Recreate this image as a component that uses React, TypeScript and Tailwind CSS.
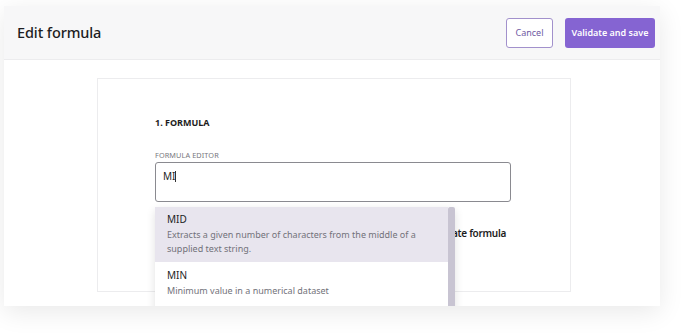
import React from "react";

const suggestions = [
  {
    name: "MID",
    description:
      "Extracts a given number of characters from the middle of a supplied text string.",
    active: true,
  },
  {
    name: "MIN",
    description: "Minimum value in a numerical dataset",
    active: false,
  },
];

export default function App() {
  return (
    <div
      className="w-[688px] h-[333px] bg-white overflow-hidden pl-[4px] pt-[6px]"
      style={{ fontFamily: '"Noto Sans", "Open Sans", sans-serif' }}
    >
      <div className="relative w-[656px] h-[300px] bg-white overflow-hidden shadow-[0_6px_24px_rgba(0,0,0,0.09)]">
        {/* header */}
        <div className="flex items-center justify-between h-[54px] bg-[#f7f7f8] border-b border-[#ececee] pl-[13px] pr-[5px]">
          <h1 className="text-[14.5px] font-medium text-[#1d1d22] tracking-[-0.1px]">
            Edit formula
          </h1>
          <div className="flex items-center gap-[12px]">
            <button className="h-[30px] w-[47px] rounded-[3px] border border-[#a291cc] bg-white text-[9px] text-[#6f5aa3]">
              Cancel
            </button>
            <button className="h-[30px] w-[90px] rounded-[3px] bg-[#8564d2] text-[9px] font-semibold text-white">
              Validate and save
            </button>
          </div>
        </div>

        {/* card */}
        <div className="ml-[93px] mt-[18px] w-[474px] h-[214px] border border-[#ececee] bg-white pl-[57px] pt-[38px]">
          <h2 className="text-[9px] font-bold text-[#1d1d22] leading-[12px]">
            1. FORMULA
          </h2>
          <p className="mt-[21px] text-[7.3px] text-[#77777e] tracking-[0.1px] leading-[10px]">
            FORMULA EDITOR
          </p>
          <div className="relative mt-[2px]">
            <div className="w-[356px] h-[40px] rounded-[3px] border border-[#8a8a90] px-[7px] pt-[6px] text-[10px] text-[#1d1d22]">
              MI<span className="inline-block w-[1px] h-[11px] bg-[#333] align-[-2px]" />
            </div>

            <div className="mt-[24px] flex justify-end w-[356px]">
              <span className="text-[10px] leading-[14px] font-semibold tracking-[-0.3px] text-[#1d1d22] pr-[5px]">
                Validate formula
              </span>
            </div>

            {/* suggestion dropdown */}
            <div className="absolute left-0 top-[45px] w-[300px] h-[120px] flex bg-white shadow-[0_3px_10px_rgba(0,0,0,0.12)] rounded-t-[2px]">
              <ul className="flex-1">
                {suggestions.map((s) => (
                  <li
                    key={s.name}
                    className={`px-[12px] ${
                      s.active ? "bg-[#e8e5ee] h-[55px] pt-[5px]" : "bg-white pt-[6px] pb-[6px]"
                    }`}
                  >
                    <div className="text-[10px] text-[#1d1d22] leading-[14px]">
                      {s.name}
                    </div>
                    <div className="text-[9px] text-[#72727a] leading-[14px] mt-[2px] pr-[10px]">
                      {s.description}
                    </div>
                  </li>
                ))}
              </ul>
              <div className="w-[7px] bg-[#c8c4d2] rounded-t-[2px]" />
            </div>
          </div>
        </div>
      </div>
    </div>
  );
}
